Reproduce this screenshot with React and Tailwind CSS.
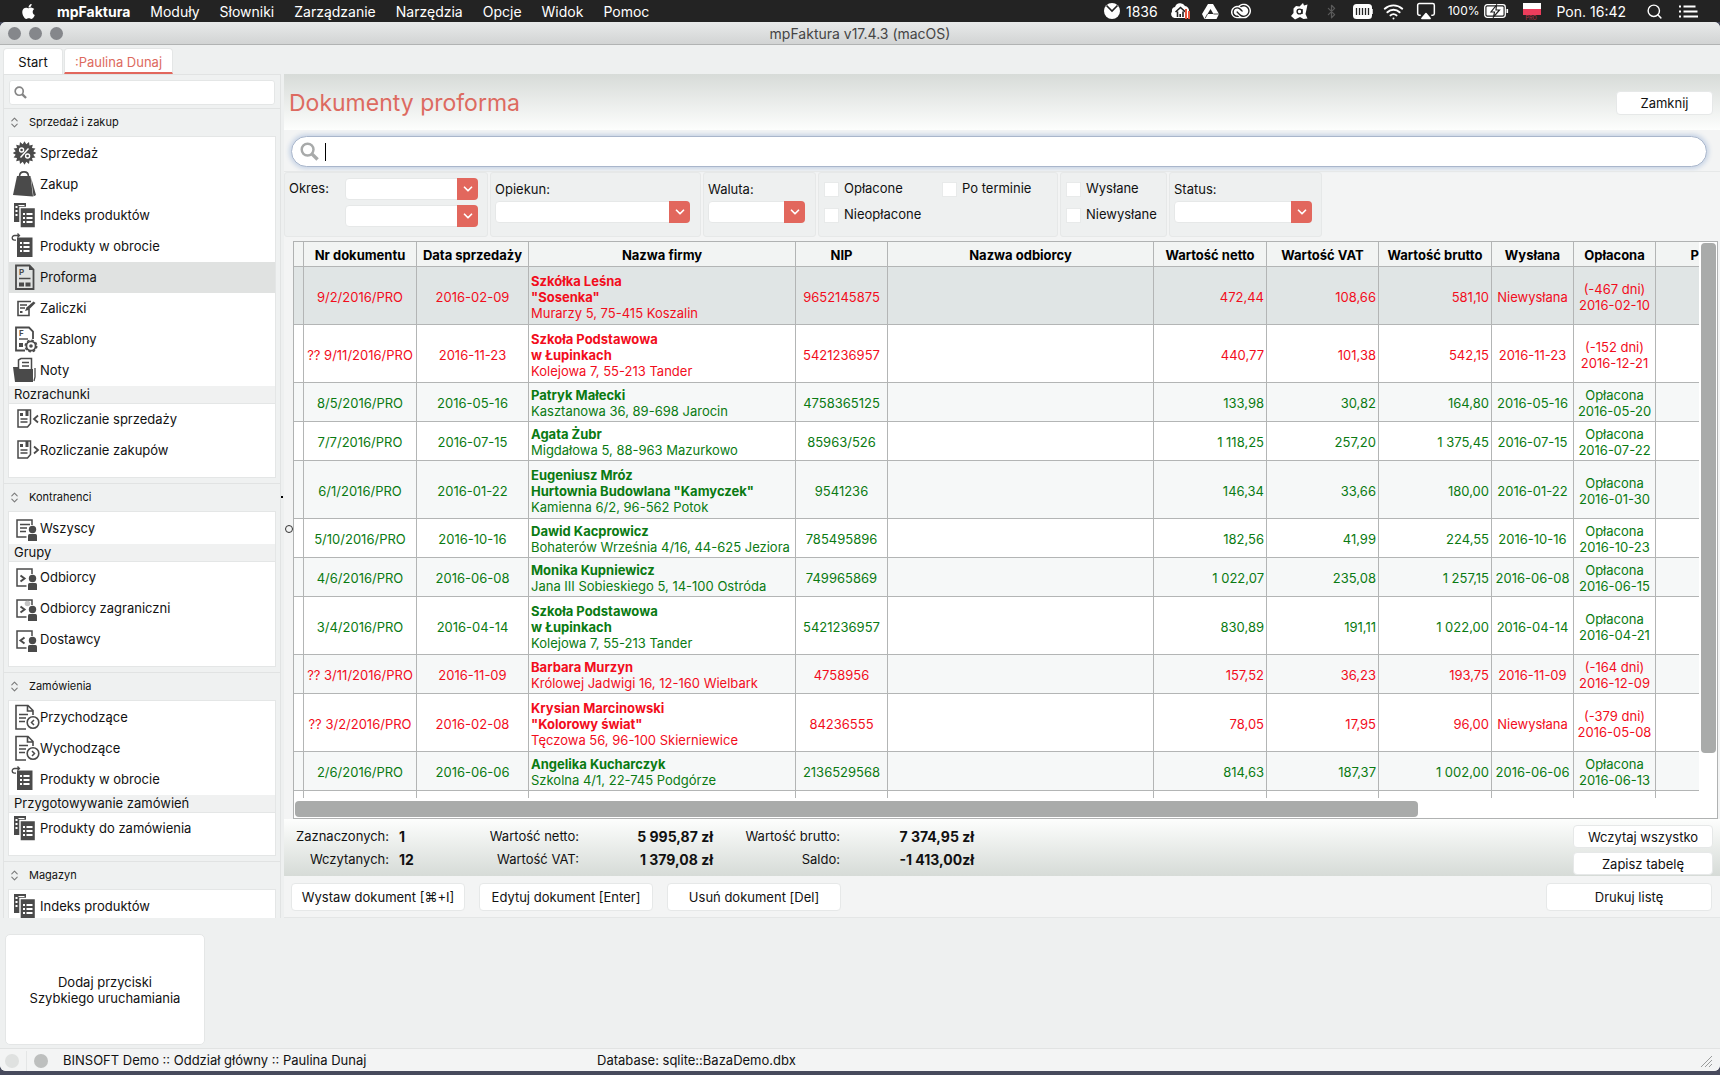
import { FaApple } from 'react-icons/fa';
import { SiAdobecreativecloud } from 'react-icons/si';
import { Airplay, Bluetooth, ChevronDown, ChevronsUpDown, Search, Wifi } from 'lucide-react';

const INK = '#4a4a4a';

/* ---------- Sidebar icons, all on the same 29x30 grid ---------- */

function Icon({ children }) {
    return (
        <svg width="29" height="30" viewBox="0 0 29 30" fill="none" stroke={INK} strokeWidth="1.8" className="shrink-0" aria-hidden="true">
            {children}
        </svg>
    );
}

function Person() {
    return (
        <g fill={INK} stroke="none">
            <circle cx="21.5" cy="15.5" r="3.7" />
            <path d="M17 27v-5.5q0-1.5 1.5-1.5h6q1.5 0 1.5 1.5V27z" />
        </g>
    );
}

function SheetLines({ x, y }) {
    return (
        <g fill="#fff" stroke="none">
            {[0, 4, 8].map((dy) => (
                <g key={dy}>
                    <rect x={x} y={y + dy} width="2" height="2" />
                    <rect x={x + 3.5} y={y + dy} width="6" height="2" />
                </g>
            ))}
        </g>
    );
}

const spikes = Array.from({ length: 32 }, (_, i) => {
    const r = i % 2 ? 9 : 11.8;
    const a = (i * Math.PI) / 16;
    return `${(13.5 + r * Math.sin(a)).toFixed(1)},${(14 - r * Math.cos(a)).toFixed(1)}`;
}).join(' ');

const icons = {
    percent: (
        <Icon>
            <polygon points={spikes} fill={INK} stroke="none" />
            <g stroke="#fff" strokeWidth="1.4">
                <circle cx="10.6" cy="11" r="2" />
                <circle cx="16.6" cy="17" r="2" />
                <path d="M17.5 9.5l-8 9" />
            </g>
        </Icon>
    ),
    bag: (
        <Icon>
            <path d="M8.5 6.5c0-3 2-4.6 4.5-4.6s4.5 1.6 4.5 4.6" strokeWidth="1.6" />
            <path d="M6 6h13.5L22 26.5 2 25z" fill={INK} stroke="none" />
            <path d="M20 7.5l5 17.5-2.5 1.5z" fill={INK} stroke="none" />
        </Icon>
    ),
    index: (
        <Icon>
            <path d="M3 2h12v19H3z" fill={INK} stroke="none" />
            <g fill="#fff" stroke="none">
                <rect x="4.5" y="5" width="2" height="2" />
                <rect x="4.5" y="9" width="2" height="2" />
                <rect x="4.5" y="13" width="2" height="2" />
                <rect x="7.5" y="4" width="6" height="1" />
            </g>
            <path d="M9 6.5h15.5V27H9z" fill={INK} stroke="#fff" strokeWidth="1.4" />
            <SheetLines x={12} y={12} />
        </Icon>
    ),
    turnover: (
        <Icon>
            <path d="M8.5 3.5h-5a2.3 2.3 0 0 0 0 4.6H5M6.5 1.5l2 2-2 2" strokeWidth="1.3" />
            <path d="M6 5.5h15.5V25H6z" fill={INK} stroke="none" />
            <SheetLines x={9} y={10} />
        </Icon>
    ),
    proforma: (
        <Icon>
            <path d="M5 2.5h13.5l4 4V26H5z" />
            <path d="M18 2v5h5z" fill={INK} stroke="none" />
            <text x="8" y="12" fontSize="8" fontWeight="700" fill={INK} stroke="none">P</text>
            <path d="M8 15.5h11.5" strokeWidth="1.5" />
            <path d="M8 19.5h5v4H8zM14.5 19.5h5v4h-5z" fill={INK} stroke="none" />
        </Icon>
    ),
    advance: (
        <Icon>
            <path d="M18 15v6.5H7v-14h13" strokeWidth="1.6" />
            <path d="M9 11h7M9 14h5" strokeWidth="1.3" />
            <path d="M9 18h2.5" strokeWidth="2" />
            <path d="M14 17l1.5-3.5 7-6 2 1.5-7 7z" fill={INK} stroke="none" />
        </Icon>
    ),
    template: (
        <Icon>
            <path d="M14 25.5H5v-23h13l4 4V14" />
            <text x="8" y="11" fontSize="8" fontWeight="700" fill={INK} stroke="none">F</text>
            <path d="M8 14h9" strokeWidth="1.4" />
            <path d="M8 18h4v4H8z" fill={INK} stroke="none" />
            <circle cx="20" cy="21" r="4.6" />
            <circle cx="20" cy="21" r="5.8" strokeWidth="1.4" strokeDasharray="2.5 2" />
            <circle cx="20" cy="21" r="1.8" fill={INK} stroke="none" />
        </Icon>
    ),
    notes: (
        <Icon>
            <path d="M7.5 13V4L10 2.5h10.500V13" strokeWidth="1.5" />
            <path d="M11 6.5h7M11 10h7" strokeWidth="1.4" />
            <path d="M2 11h5l1.5 2H22v13H4z" fill={INK} stroke="none" />
            <path d="M24 12v9l-1 4" strokeWidth="1.3" />
        </Icon>
    ),
    settleIn: (
        <Icon>
            <path d="M7 5h12.5v13.5l-3 3.5H7z" strokeWidth="1.5" />
            <path d="M9 8h3v3H9zM14.5 5h3v6h-3z" fill={INK} stroke="none" />
            <path d="M9.5 14h7M9.5 17h7" strokeWidth="1.3" />
            <path d="M27 10.5L23 14l4 3.5" />
        </Icon>
    ),
    settleOut: (
        <Icon>
            <path d="M7 5h12.5v13.5l-3 3.5H7z" strokeWidth="1.5" />
            <path d="M9 8h3v3H9zM14.5 5h3v6h-3z" fill={INK} stroke="none" />
            <path d="M9.5 14h7M9.5 17h7" strokeWidth="1.3" />
            <path d="M23 10.5l4 3.5-4 3.5" />
        </Icon>
    ),
    everyone: (
        <Icon>
            <path d="M15.5 23H6V6h15v5" strokeWidth="1.5" />
            <path d="M9 10.5h10M9 14h7M9 17.5h6" strokeWidth="1.4" />
            <Person />
        </Icon>
    ),
    receivers: (
        <Icon>
            <path d="M15.5 23H6V6h15v5" strokeWidth="1.5" />
            <path d="M9.5 12.5l4 3-4 3" strokeWidth="2" />
            <Person />
        </Icon>
    ),
    foreign: (
        <Icon>
            <path d="M15.5 23H6V6h15v5" strokeWidth="1.5" />
            <circle cx="16.5" cy="9.5" r="2.8" fill="#c4c4c4" stroke="none" />
            <path d="M9.5 12.5l4 3-4 3" strokeWidth="2" />
            <Person />
        </Icon>
    ),
    suppliers: (
        <Icon>
            <path d="M15.5 23H6V6h15v5" strokeWidth="1.5" />
            <path d="M13.5 12.5l-4 3 4 3" strokeWidth="2" />
            <Person />
        </Icon>
    ),
    incoming: (
        <Icon>
            <path d="M15 26H5V2.5h12l5 5V12M16.5 3v5H22" strokeWidth="1.6" />
            <path d="M8 11.5h9M8 15h7M8 18.5h6" strokeWidth="1.5" />
            <circle cx="22" cy="19.5" r="5.8" strokeWidth="1.6" />
            <path d="M23 17l-2.5 2.5L23 22" strokeWidth="1.5" />
        </Icon>
    ),
    outgoing: (
        <Icon>
            <path d="M15 26H5V2.5h12l5 5V12M16.5 3v5H22" strokeWidth="1.6" />
            <path d="M8 11.5h9M8 15h7M8 18.5h6" strokeWidth="1.5" />
            <circle cx="22" cy="19.5" r="5.8" strokeWidth="1.6" />
            <path d="M21 17l2.5 2.5L21 22" strokeWidth="1.5" />
        </Icon>
    ),
};

function Magnifier({ size, className }) {
    return (
        <svg width={size} height={size} viewBox="0 0 20 20" fill="none" stroke="currentColor" className={`shrink-0 ${className}`} aria-hidden="true">
            <circle cx="8" cy="8" r="6.2" strokeWidth="2.6" />
            <path d="M12.5 12.5l6 6" strokeWidth="3.6" />
        </svg>
    );
}

/* ---------- Data ---------- */

const menu = ['Moduły', 'Słowniki', 'Zarządzanie', 'Narzędzia', 'Opcje', 'Widok', 'Pomoc'];

const sections = [
    {
        title: 'Sprzedaż i zakup',
        items: [
            { icon: 'percent', label: 'Sprzedaż' },
            { icon: 'bag', label: 'Zakup' },
            { icon: 'index', label: 'Indeks produktów' },
            { icon: 'turnover', label: 'Produkty w obrocie' },
            { icon: 'proforma', label: 'Proforma', active: true },
            { icon: 'advance', label: 'Zaliczki' },
            { icon: 'template', label: 'Szablony' },
            { icon: 'notes', label: 'Noty' },
            { group: 'Rozrachunki' },
            { icon: 'settleIn', label: 'Rozliczanie sprzedaży' },
            { icon: 'settleOut', label: 'Rozliczanie zakupów' },
        ],
    },
    {
        title: 'Kontrahenci',
        items: [
            { icon: 'everyone', label: 'Wszyscy' },
            { group: 'Grupy' },
            { icon: 'receivers', label: 'Odbiorcy' },
            { icon: 'foreign', label: 'Odbiorcy zagraniczni' },
            { icon: 'suppliers', label: 'Dostawcy' },
        ],
    },
    {
        title: 'Zamówienia',
        items: [
            { icon: 'incoming', label: 'Przychodzące' },
            { icon: 'outgoing', label: 'Wychodzące' },
            { icon: 'turnover', label: 'Produkty w obrocie' },
            { group: 'Przygotowywanie zamówień' },
            { icon: 'index', label: 'Produkty do zamówienia' },
        ],
    },
    {
        title: 'Magazyn',
        items: [{ icon: 'index', label: 'Indeks produktów' }],
    },
];

const columns = ['', 'Nr dokumentu', 'Data sprzedaży', 'Nazwa firmy', 'NIP', 'Nazwa odbiorcy', 'Wartość netto', 'Wartość VAT', 'Wartość brutto', 'Wysłana', 'Opłacona'];

const rows = [
    { nr: '9/2/2016/PRO', date: '2016-02-09', name: ['Szkółka Leśna', '"Sosenka"'], address: 'Murarzy 5, 75-415 Koszalin', nip: '9652145875', netto: '472,44', vat: '108,66', brutto: '581,10', sent: 'Niewysłana', paid: ['(-467 dni)', '2016-02-10'], late: true, selected: true },
    { nr: '?? 9/11/2016/PRO', date: '2016-11-23', name: ['Szkoła Podstawowa', 'w Łupinkach'], address: 'Kolejowa 7, 55-213 Tander', nip: '5421236957', netto: '440,77', vat: '101,38', brutto: '542,15', sent: '2016-11-23', paid: ['(-152 dni)', '2016-12-21'], late: true },
    { nr: '8/5/2016/PRO', date: '2016-05-16', name: ['Patryk Małecki'], address: 'Kasztanowa 36, 89-698 Jarocin', nip: '4758365125', netto: '133,98', vat: '30,82', brutto: '164,80', sent: '2016-05-16', paid: ['Opłacona', '2016-05-20'] },
    { nr: '7/7/2016/PRO', date: '2016-07-15', name: ['Agata Żubr'], address: 'Migdałowa 5, 88-963 Mazurkowo', nip: '85963/526', netto: '1 118,25', vat: '257,20', brutto: '1 375,45', sent: '2016-07-15', paid: ['Opłacona', '2016-07-22'] },
    { nr: '6/1/2016/PRO', date: '2016-01-22', name: ['Eugeniusz Mróz', 'Hurtownia Budowlana "Kamyczek"'], address: 'Kamienna 6/2, 96-562 Potok', nip: '9541236', netto: '146,34', vat: '33,66', brutto: '180,00', sent: '2016-01-22', paid: ['Opłacona', '2016-01-30'] },
    { nr: '5/10/2016/PRO', date: '2016-10-16', name: ['Dawid Kacprowicz'], address: 'Bohaterów Września 4/16, 44-625 Jeziora', nip: '785495896', netto: '182,56', vat: '41,99', brutto: '224,55', sent: '2016-10-16', paid: ['Opłacona', '2016-10-23'] },
    { nr: '4/6/2016/PRO', date: '2016-06-08', name: ['Monika Kupniewicz'], address: 'Jana III Sobieskiego 5, 14-100 Ostróda', nip: '749965869', netto: '1 022,07', vat: '235,08', brutto: '1 257,15', sent: '2016-06-08', paid: ['Opłacona', '2016-06-15'] },
    { nr: '3/4/2016/PRO', date: '2016-04-14', name: ['Szkoła Podstawowa', 'w Łupinkach'], address: 'Kolejowa 7, 55-213 Tander', nip: '5421236957', netto: '830,89', vat: '191,11', brutto: '1 022,00', sent: '2016-04-14', paid: ['Opłacona', '2016-04-21'] },
    { nr: '?? 3/11/2016/PRO', date: '2016-11-09', name: ['Barbara Murzyn'], address: 'Królowej Jadwigi 16, 12-160 Wielbark', nip: '4758956', netto: '157,52', vat: '36,23', brutto: '193,75', sent: '2016-11-09', paid: ['(-164 dni)', '2016-12-09'], late: true },
    { nr: '?? 3/2/2016/PRO', date: '2016-02-08', name: ['Krysian Marcinowski', '"Kolorowy świat"'], address: 'Tęczowa 56, 96-100 Skierniewice', nip: '84236555', netto: '78,05', vat: '17,95', brutto: '96,00', sent: 'Niewysłana', paid: ['(-379 dni)', '2016-05-08'], late: true },
    { nr: '2/6/2016/PRO', date: '2016-06-06', name: ['Angelika Kucharczyk'], address: 'Szkolna 4/1, 22-745 Podgórze', nip: '2136529568', netto: '814,63', vat: '187,37', brutto: '1 002,00', sent: '2016-06-06', paid: ['Opłacona', '2016-06-13'] },
];

/* ---------- Small controls ---------- */

function Button({ children, className = '' }) {
    return (
        <button type="button" className={`rounded-[4px] border border-[#e6e8e8] bg-white pt-0.5 text-center whitespace-nowrap ${className}`}>
            {children}
        </button>
    );
}

function Dropdown({ id, labelledBy, className = '' }) {
    return (
        <div className={`relative h-[22px] ${className}`}>
            <select id={id} aria-labelledby={labelledBy} className="block h-full w-full appearance-none rounded-[4px] border border-[#e6e8e8] bg-white" />
            <span className="pointer-events-none absolute inset-y-0 right-0 flex w-[21px] items-center justify-center rounded-r-[4px] bg-[#e2675d] text-white">
                <ChevronDown size={14} strokeWidth={3} />
            </span>
        </div>
    );
}

function Check({ label, className = '' }) {
    return (
        <label className={`flex h-[26px] items-center gap-[5px] ${className}`}>
            <input type="checkbox" className="h-[15px] w-[15px] appearance-none border border-[#e8eaea] bg-white" />
            {label}
        </label>
    );
}

function FilterBox({ children, className = '' }) {
    return <div className={`rounded-[3px] border border-[#e6e8e8] bg-[#eef0f0] ${className}`}>{children}</div>;
}

/* ---------- Layout parts ---------- */

function MenuBar() {
    return (
        <header className="flex h-[22px] shrink-0 items-center justify-between bg-[#232323] pl-5 pr-[22px] text-[14px] text-white">
            <nav className="flex items-center gap-5">
                <FaApple size={17} />
                <a href="#" className="font-bold">mpFaktura</a>
                {menu.map((name) => (
                    <a key={name} href="#">{name}</a>
                ))}
            </nav>
            <div className="flex items-center">
                <svg width="16" height="16" viewBox="0 0 16 16" className="mr-1.5">
                    <circle cx="8" cy="8" r="8" fill="#fff" />
                    <path d="M2.5 2.5L8 8l5.500-5.500" fill="none" stroke="#232323" strokeWidth="1.6" />
                </svg>
                <span className="mr-3">1836</span>
                <svg width="22" height="18" viewBox="0 0 22 18" className="mr-2.5">
                    <path d="M4.5 16A4 4 0 0 1 2 9.5 4 4 0 0 1 5 5a5.5 5.5 0 0 1 10-1 4.500 4.500 0 0 1 4 5v7z" fill="#fff" />
                    <path d="M5.5 10l5-4.500 5 4.500M7.500 9.500V15M13 9.500V15M10.200 12v3" fill="none" stroke="#232323" strokeWidth="1.6" />
                    <path d="M15 7h2v10h-2zM18 9h2v8h-2z" fill="#e5553c" />
                </svg>
                <svg width="17" height="15" viewBox="0 0 17 15" className="mr-3">
                    <path d="M6 0h5l6 10-2.500 5h-12L0 10z" fill="#fff" />
                    <path d="M8.5 5l3 5h-6z" fill="#232323" />
                    <path d="M3 14.500L5.500 10M11.500 10H17" stroke="#232323" strokeWidth=".8" />
                </svg>
                <SiAdobecreativecloud size={20} className="mr-10" />
                <svg width="17" height="17" viewBox="0 0 17 17" className="mr-4">
                    <path d="M12 0l1 2.500 3.500-1-1 5-1 4.500 2 4.500-4 .5-3.500-2-5 2.500L0 13l2.500-3V5.500L5 3l3.500.5z" fill="#fff" />
                    <circle cx="8.5" cy="8.5" r="2.4" fill="none" stroke="#232323" strokeWidth="1.4" />
                    <path d="M11 6v5" stroke="#232323" strokeWidth="1.4" />
                </svg>
                <Bluetooth size={15} className="mr-3.5 text-[#5a5a5a]" />
                <svg width="20" height="15" viewBox="0 0 20 15" className="mr-2.5">
                    <rect width="19" height="15" rx="3.5" fill="#fff" />
                    <path d="M3.5 4v7M6.5 4v7M9.5 4v7M12.5 4v7M15.5 4v7" stroke="#232323" strokeWidth="1.3" />
                    <path d="M19 5v5" stroke="#fff" strokeWidth="1.5" />
                </svg>
                <Wifi size={21} strokeWidth={2.2} className="mr-3" />
                <Airplay size={20} strokeWidth={1.8} className="mr-3 [&>path:last-child]:fill-white" />
                <span className="mr-1 text-[12px]">100%</span>
                <svg width="25" height="14" viewBox="0 0 25 14" className="mr-3.5">
                    <rect x=".7" y=".7" width="20.6" height="12.6" rx="2.5" fill="none" stroke="#fff" strokeWidth="1.3" />
                    <rect x="2.5" y="2.5" width="17" height="9" rx="1" fill="#fff" />
                    <path d="M12.5 1L7 8h3.500L9.500 13l6-7H12z" fill="#fff" stroke="#232323" strokeWidth="1.2" />
                    <path d="M23.300 5v4" stroke="#fff" strokeWidth="1.6" />
                </svg>
                <svg width="18" height="18" viewBox="0 0 18 18" className="mr-4">
                    <path d="M0 1h18v6H0z" fill="#fff" />
                    <path d="M0 7h18v6H0z" fill="#ec3d5c" />
                    <text x="2.5" y="17.8" fontSize="5.5" fill="#b53348">PRO</text>
                </svg>
                <span className="mr-5">Pon. 16:42</span>
                <Search size={17} strokeWidth={2} className="mr-4" />
                <svg width="19" height="13" viewBox="0 0 19 13" stroke="#fff" strokeWidth="1.8">
                    <path d="M0 1.500h2M4.500 1.500h12M0 6.500h2M4.500 6.500h14M0 11.500h2M4.500 11.500h14.500" />
                </svg>
            </div>
        </header>
    );
}

function Section({ title, items }) {
    return (
        <section className="mb-[5px] border-t border-[#e1e3e3] px-1 last:mb-0">
            <h2 className="flex h-[27px] items-center text-[11px]">
                <ChevronsUpDown size={13} className="mr-2 text-[#7a7a7a]" />
                {title}
            </h2>
            <ul className="border border-[#e4e6e6] bg-white pb-[11px] pt-px">
                {items.map((item) =>
                    item.group ? (
                        <li key={item.group} className="flex h-[18px] items-center border-b border-[#e4e6e6] bg-[#f0f1f1] pl-[5px]">
                            {item.group}
                        </li>
                    ) : (
                        <li key={item.label}>
                            <a href="#" className={`flex h-[31px] items-center pl-0.5 whitespace-nowrap ${item.active ? 'bg-[#e0e2e1]' : ''}`}>
                                {icons[item.icon]}
                                {item.label}
                            </a>
                        </li>
                    ),
                )}
            </ul>
        </section>
    );
}

function Sidebar() {
    return (
        <aside className="ml-[3px] flex w-[278px] shrink-0 flex-col overflow-hidden border-x border-t border-[#e1e3e3] bg-[#eff1f1]">
            <div className="shrink-0 px-[5px] pb-[3px] pt-[5px]">
                <label className="flex h-[25px] items-center rounded-[3px] border border-[#e4e6e6] bg-white pl-1">
                    <Magnifier size={13} className="text-[#858585]" />
                    <input type="text" aria-label="Szukaj modułu" className="min-w-0 flex-1 bg-transparent px-1 outline-none" />
                </label>
            </div>
            <div className="min-h-0 flex-1 overflow-hidden">
                {sections.map((section) => (
                    <Section key={section.title} {...section} />
                ))}
            </div>
        </aside>
    );
}

function Filters() {
    return (
        <div className="flex h-[70px] shrink-0 items-stretch gap-[2px] border-t border-[#e6e8e8] pb-1">
            <FilterBox className="flex w-[204px] gap-4 pl-1 pt-[5px]">
                <span id="okres" className="w-10 leading-5">Okres:</span>
                <div className="flex flex-col gap-[5px]">
                    <Dropdown labelledBy="okres" className="w-[133px]" />
                    <Dropdown labelledBy="okres" className="w-[133px]" />
                </div>
            </FilterBox>
            <FilterBox className="flex w-[211px] flex-col gap-[2px] px-1 pt-[6px]">
                <label htmlFor="opiekun" className="leading-5">Opiekun:</label>
                <Dropdown id="opiekun" className="w-[195px]" />
            </FilterBox>
            <FilterBox className="flex w-[113px] flex-col gap-[2px] px-1 pt-[6px]">
                <label htmlFor="waluta" className="leading-5">Waluta:</label>
                <Dropdown id="waluta" className="w-[97px]" />
            </FilterBox>
            <FilterBox className="w-[240px] pl-[5px] pt-[3px]">
                <div className="flex">
                    <Check label="Opłacone" className="w-[118px]" />
                    <Check label="Po terminie" />
                </div>
                <Check label="Nieopłacone" />
            </FilterBox>
            <FilterBox className="w-[107px] pl-[5px] pt-[3px]">
                <Check label="Wysłane" />
                <Check label="Niewysłane" />
            </FilterBox>
            <FilterBox className="flex w-[153px] flex-col gap-[2px] px-1 pt-[6px]">
                <label htmlFor="status" className="leading-5">Status:</label>
                <Dropdown id="status" className="w-[138px]" />
            </FilterBox>
        </div>
    );
}

const cell = 'overflow-hidden whitespace-nowrap border-b border-r border-[#b3b5b5] px-0.5 pt-0.5';

function Documents() {
    return (
        <div className="ml-[9px] mr-[2px] flex min-h-0 flex-1 flex-col border border-[#b0b2b2] bg-white">
            <div className="flex min-h-0 flex-1">
                <div className="min-w-0 flex-1 overflow-hidden">
                    <table className="w-full table-fixed border-separate border-spacing-0 text-[13px] leading-4">
                        <colgroup>
                            <col className="w-[10px]" />
                            <col className="w-[113px]" />
                            <col className="w-[112px]" />
                            <col className="w-[267px]" />
                            <col className="w-[92px]" />
                            <col className="w-[266px]" />
                            <col className="w-[113px]" />
                            <col className="w-[112px]" />
                            <col className="w-[113px]" />
                            <col className="w-[82px]" />
                            <col className="w-[82px]" />
                            <col />
                        </colgroup>
                        <thead className="bg-[#f2f4f3]">
                            <tr className="h-[25px]">
                                {columns.map((name) => (
                                    <th key={name} className={`${cell} font-bold text-black`}>{name}</th>
                                ))}
                                <th className="border-b border-[#b3b5b5] pt-0.5 text-right font-bold text-black">P</th>
                            </tr>
                        </thead>
                        <tbody>
                            {rows.map((row) => (
                                <tr
                                    key={row.nr}
                                    className={`${row.name.length > 1 ? 'h-[58px]' : 'h-[39px]'} ${row.late ? 'text-[#f20d1c]' : 'text-[#0a7a12]'} ${row.selected ? 'bg-[#e0e5e5]' : 'odd:bg-[#f6f8f8]'}`}
                                >
                                    <td className={cell} />
                                    <td className={`${cell} text-center`}>{row.nr}</td>
                                    <td className={`${cell} text-center`}>{row.date}</td>
                                    <td className={cell}>
                                        {row.name.map((line) => (
                                            <div key={line} className="font-bold">{line}</div>
                                        ))}
                                        <div>{row.address}</div>
                                    </td>
                                    <td className={`${cell} text-center`}>{row.nip}</td>
                                    <td className={cell} />
                                    <td className={`${cell} text-right`}>{row.netto}</td>
                                    <td className={`${cell} text-right`}>{row.vat}</td>
                                    <td className={`${cell} text-right`}>{row.brutto}</td>
                                    <td className={`${cell} text-center`}>{row.sent}</td>
                                    <td className={`${cell} text-center`}>
                                        {row.paid.map((line) => (
                                            <div key={line}>{line}</div>
                                        ))}
                                    </td>
                                    <td className="border-b border-[#b3b5b5]" />
                                </tr>
                            ))}
                            <tr className="h-[39px]">
                                {columns.map((name) => (
                                    <td key={name} className={cell} />
                                ))}
                                <td />
                            </tr>
                        </tbody>
                    </table>
                </div>
                <div className="w-[18px] shrink-0 p-px">
                    <div className="ml-px h-[92%] rounded-[4px] bg-[#a9abaa]" />
                </div>
            </div>
            <div className="shrink-0 px-px pb-px pt-[3px]">
                <div className="h-4 w-[79%] rounded-[4px] bg-[#a9abaa]" />
            </div>
        </div>
    );
}

function Summary() {
    return (
        <div className="flex h-[57px] shrink-0 justify-between bg-linear-to-b from-[#fdfefd] to-[#d6dbd7] pl-3 pr-[7px]">
            <dl className="grid grid-cols-[93px_64px_126px_134px_127px_134px] content-center pt-px text-right leading-[23px] whitespace-nowrap [&>dd]:text-[14px]">
                <dt>Zaznaczonych:</dt>
                <dd className="pl-2.5 text-left font-bold">1</dd>
                <dt>Wartość netto:</dt>
                <dd className="font-bold">5 995,87 zł</dd>
                <dt>Wartość brutto:</dt>
                <dd className="font-bold">7 374,95 zł</dd>
                <dt>Wczytanych:</dt>
                <dd className="pl-2.5 text-left font-bold">12</dd>
                <dt>Wartość VAT:</dt>
                <dd className="font-bold">1 379,08 zł</dd>
                <dt>Saldo:</dt>
                <dd className="font-bold">-1 413,00zł</dd>
            </dl>
            <div className="flex flex-col gap-1 pt-[6px]">
                <Button className="h-[23px] w-[140px]">Wczytaj wszystko</Button>
                <Button className="h-[23px] w-[140px]">Zapisz tabelę</Button>
            </div>
        </div>
    );
}

export default function App() {
    return (
        <div className="flex h-screen flex-col overflow-hidden bg-[#474a5c] font-['Inter',sans-serif] text-[13px] text-[#111]">
            <MenuBar />
            <div className="mb-1 flex min-h-0 flex-1 flex-col overflow-hidden rounded-[6px] bg-[#eef0f0]">
                {/* Window title */}
                <div className="flex h-[23px] shrink-0 items-center border-b border-[#b1b3b3] bg-linear-to-b from-[#e8eaea] to-[#d2d4d4] px-2">
                    <div className="flex flex-1 gap-2">
                        <span className="h-[13px] w-[13px] rounded-full bg-[#85878b]" />
                        <span className="h-[13px] w-[13px] rounded-full bg-[#85878b]" />
                        <span className="h-[13px] w-[13px] rounded-full bg-[#85878b]" />
                    </div>
                    <h1 className="text-[14px] text-[#454545]">mpFaktura v17.4.3 (macOS)</h1>
                    <div className="flex-1" />
                </div>

                {/* Tabs */}
                <div className="flex h-[29px] shrink-0 gap-px pl-[3px] pt-[3px]">
                    <button type="button" className="h-[26px] w-[60px] rounded-t-[4px] border border-b-0 border-[#e4e6e6] bg-white pt-0.5">Start</button>
                    <button type="button" className="h-[26px] w-[109px] rounded-t-[4px] border border-b-2 border-[#e4e6e6] border-b-[#e2675d] bg-white pt-1 text-[#dd6a60]">:Paulina Dunaj</button>
                </div>

                <div className="flex min-h-0 flex-1">
                    <Sidebar />

                    {/* Splitter */}
                    <div className="relative w-[3px] shrink-0">
                        <span className="absolute left-0 top-[422px] h-0.5 w-0.5 bg-black" />
                        <span className="absolute left-1 top-[451px] h-2 w-2 rounded-full border-[1.5px] border-[#333]" />
                    </div>

                    <main className="flex min-w-0 flex-1 flex-col border-b border-[#e4e6e6] bg-[#f3f4f4]">
                        <div className="flex h-14 shrink-0 items-center justify-between bg-linear-to-b from-[#d7dbd8] to-[#fdfefd] pl-[5px] pr-[7px] pt-0.5">
                            <h2 className="text-[23px] text-[#dd6a60]">Dokumenty proforma</h2>
                            <Button className="h-6 w-[97px]">Zamknij</Button>
                        </div>

                        <div className="h-[41px] shrink-0 pl-[7px] pr-[13px] pt-[6px]">
                            <label className="flex h-[31px] items-center rounded-full border border-[#a9b6cb] bg-white pl-2 shadow-[0_0_4px_2px_#c9d5e6]">
                                <Magnifier size={19} className="text-[#a8aaaa]" />
                                <span className="ml-[6px] h-[18px] w-px bg-black" />
                                <input type="text" aria-label="Szukaj dokumentu" className="min-w-0 flex-1 bg-transparent px-1 outline-none" />
                            </label>
                        </div>

                        <Filters />
                        <Documents />
                        <Summary />

                        <div className="flex h-[41px] shrink-0 items-center gap-[14px] pl-[7px] pr-2">
                            <Button className="h-7 w-[174px]">Wystaw dokument [⌘+I]</Button>
                            <Button className="h-7 w-[174px]">Edytuj dokument [Enter]</Button>
                            <Button className="h-7 w-[174px]">Usuń dokument [Del]</Button>
                            <Button className="ml-auto h-7 w-[166px]">Drukuj listę</Button>
                        </div>
                    </main>
                </div>

                {/* Quick launch */}
                <div className="h-[130px] shrink-0 pl-[5px] pt-4">
                    <button type="button" className="h-[111px] w-[200px] rounded-[5px] border border-[#e4e6e6] bg-white leading-4">
                        Dodaj przyciski
                        <br />
                        Szybkiego uruchamiania
                    </button>
                </div>

                {/* Status bar */}
                <footer className="flex h-[23px] shrink-0 items-center border-t border-[#e1e3e3] bg-[#f3f4f4] pl-[5px] pr-2 pt-0.5">
                    <span className="h-[14px] w-[14px] rounded-full bg-[#dfe1e0]" />
                    <span className="mx-[7px] h-full w-px bg-[#e4e6e6]" />
                    <span className="h-[14px] w-[14px] rounded-full bg-[#bdbfbe]" />
                    <span className="ml-[15px] w-[534px]">BINSOFT Demo :: Oddział główny :: Paulina Dunaj</span>
                    <span>Database: sqlite::BazaDemo.dbx</span>
                    <svg width="11" height="11" viewBox="0 0 11 11" stroke="#9a9c9c" className="ml-auto">
                        <path d="M0 11L11 0M4 11l7-7M8 11l3-3" />
                    </svg>
                </footer>
            </div>
        </div>
    );
}
